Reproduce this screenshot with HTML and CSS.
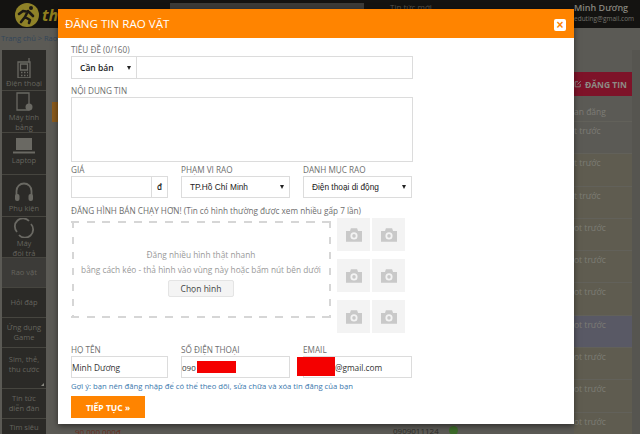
FILE: index.html
```html
<!DOCTYPE html>
<html lang="vi">
<head>
<meta charset="utf-8">
<title>Đăng tin rao vặt</title>
<link rel="stylesheet" href="styles.css">
</head>
<body>
<div class="page">
  <header class="topbar">
    <div class="logo"><svg width="26" height="26" viewBox="0 0 26 26"><circle cx="13" cy="13" r="12" fill="#8f8228"/><path d="M7 20l4-5 5 3-1 3M9 9l6 1 4 4M11 15l3-6M5 12l4-3" fill="none" stroke="#1d1a14" stroke-width="2.600" stroke-linecap="round" stroke-linejoin="round"/><circle cx="17" cy="6" r="2" fill="#1d1a14"/></svg><span class="logo-text">thegioididong</span></div>
    <div class="searchbox"></div>
    <div class="top-note">Tin tức mới</div>
    <div class="user"><b>Minh Dương</b><small>eduting@gmail.com</small></div>
  </header>
  <div class="crumbs">Trang chủ &gt; Rao vặt</div>
  <div class="main">
    <nav class="side">
      <div class="item h41"><svg width="20" height="24" viewBox="0 0 20 24"><path d="M4 8h12v16H4zM6.500 10h7v6h-7zM7 18.500h1.500M10 18.500h1.500M13 18.500h1M7 21.500h1.500M10 21.500h1.500M13 21.500h1M15 8V4" fill="none" stroke="#6a6963" stroke-width="1.300"/></svg>Điện thoại</div>
      <div class="item h42 snug"><svg width="22" height="20" viewBox="0 0 22 20"><path d="M4 1h12v17H4z" fill="none" stroke="#6a6963" stroke-width="1.300"/><circle cx="16" cy="15" r="3.500" fill="#6a6963"/></svg>Máy tính<br>bảng</div>
      <div class="item h42 lift"><svg width="26" height="20" viewBox="0 0 26 20"><path d="M5 3h16v12H5z" fill="#6a6963"/><path d="M2 17.500h22" stroke="#6a6963" stroke-width="2"/></svg>Laptop</div>
      <div class="item h42"><svg width="24" height="24" viewBox="0 0 24 24"><path d="M4.500 17V12a7.500 7.500 0 0 1 15 0v5" fill="none" stroke="#6a6963" stroke-width="1.800"/><rect x="3" y="15" width="4.500" height="7" rx="2" fill="#6a6963"/><rect x="16.500" y="15" width="4.500" height="7" rx="2" fill="#6a6963"/></svg>Phụ kiện</div>
      <div class="item h41 snug"><svg width="22" height="20" viewBox="0 0 22 20"><path d="M4 14A8 8 0 0 1 16 3M18 6A8 8 0 0 1 6 17" fill="none" stroke="#6a6963" stroke-width="1.800"/></svg>Máy<br>đổi trả</div>
      <div class="item h30 on">Rao vặt</div>
      <div class="item h30">Hỏi đáp</div>
      <div class="item h30">Ứng dụng<br>Game</div>
      <div class="item h41 lift2">Sim, thẻ,<br>thu cước<i class="corner"></i></div>
      <div class="item h30">Tin tức<br>diễn đàn</div>
      <div class="item last">Tìm siêu</div>
    </nav>
    <div class="content">
      <div class="post-btn"><svg width="14" height="14" viewBox="0 0 14 14"><path d="M11 7v5H2V3h5M6 8l6-6" fill="none" stroke="#8d8b85" stroke-width="1.600"/></svg>ĐĂNG TIN</div>
      <div class="ago head">an đăng</div>
      <div class="ago">t trước</div>
      <div class="ago tint">t trước</div>
      <div class="ago tint">t trước</div>
      <div class="ago tint">ot trước</div>
      <div class="ago tint">ot trước</div>
      <div class="ago tint">ot trước</div>
      <div class="ago blue">ot trước</div>
      <div class="ago tint">ot trước</div>
      <div class="ago tint">ot trước</div>
      <div class="ago tint">ot trước</div>
    </div>
    <div class="scroll"></div>
  </div>
  <i class="peek-tab"></i>
  <span class="peek-price">90.000.000đ</span>
  <span class="peek-phone">0909011124</span>
  <i class="peek-check"></i>
</div>

<section class="modal">
  <h1 class="modal-head">ĐĂNG TIN RAO VẶT<span class="close">×</span></h1>
  <form class="modal-body">
    <label class="lbl">TIÊU ĐỀ (0/160)</label>
    <div class="title-row">
      <div class="box sel type">Cần bán<i class="caret"></i></div>
      <div class="box grow"></div>
    </div>
    <label class="lbl gap1">NỘI DUNG TIN</label>
    <div class="box area"></div>
    <div class="cols">
      <div class="col c1"><label class="lbl">GIÁ</label><div class="box price"><span class="dong">đ</span></div></div>
      <div class="col c2"><label class="lbl">PHẠM VI RAO</label><div class="box sel arial">TP.Hồ Chí Minh<i class="caret"></i></div></div>
      <div class="col c3"><label class="lbl">DANH MỤC RAO</label><div class="box sel arial">Điện thoại di động<i class="caret"></i></div></div>
    </div>
    <p class="lbl photos-lbl">ĐĂNG HÌNH BÁN CHẠY HƠN! (Tin có hình thường được xem nhiều gấp 7 lần)</p>
    <div class="photos">
      <div class="drop">
        <p>Đăng nhiều hình thật nhanh</p>
        <p>bằng cách kéo - thả hình vào vùng này hoặc bấm nút bên dưới</p>
        <span class="pick">Chọn hình</span>
      </div>
      <div class="thumbs">
        <div class="thumb"><svg class="cam" viewBox="0 0 18 15"><path d="M0 3h4.500l1-3h7l1 3H18v12H0z" fill="#c9c9c9"/><circle cx="9" cy="8.500" r="4" fill="#f3f3f3"/><circle cx="9" cy="8.500" r="2" fill="#c9c9c9"/></svg></div>
        <div class="thumb"><svg class="cam" viewBox="0 0 18 15"><path d="M0 3h4.500l1-3h7l1 3H18v12H0z" fill="#c9c9c9"/><circle cx="9" cy="8.500" r="4" fill="#f3f3f3"/><circle cx="9" cy="8.500" r="2" fill="#c9c9c9"/></svg></div>
        <div class="thumb"><svg class="cam" viewBox="0 0 18 15"><path d="M0 3h4.500l1-3h7l1 3H18v12H0z" fill="#c9c9c9"/><circle cx="9" cy="8.500" r="4" fill="#f3f3f3"/><circle cx="9" cy="8.500" r="2" fill="#c9c9c9"/></svg></div>
        <div class="thumb"><svg class="cam" viewBox="0 0 18 15"><path d="M0 3h4.500l1-3h7l1 3H18v12H0z" fill="#c9c9c9"/><circle cx="9" cy="8.500" r="4" fill="#f3f3f3"/><circle cx="9" cy="8.500" r="2" fill="#c9c9c9"/></svg></div>
        <div class="thumb"><svg class="cam" viewBox="0 0 18 15"><path d="M0 3h4.500l1-3h7l1 3H18v12H0z" fill="#c9c9c9"/><circle cx="9" cy="8.500" r="4" fill="#f3f3f3"/><circle cx="9" cy="8.500" r="2" fill="#c9c9c9"/></svg></div>
        <div class="thumb"><svg class="cam" viewBox="0 0 18 15"><path d="M0 3h4.500l1-3h7l1 3H18v12H0z" fill="#c9c9c9"/><circle cx="9" cy="8.500" r="4" fill="#f3f3f3"/><circle cx="9" cy="8.500" r="2" fill="#c9c9c9"/></svg></div>
      </div>
    </div>
    <div class="cols contact">
      <div class="col c1"><label class="lbl">HỌ TÊN</label><div class="box val">Minh Dương</div></div>
      <div class="col c2"><label class="lbl">SỐ ĐIỆN THOẠI</label><div class="box val small">090<span class="red r1"></span></div></div>
      <div class="col c3"><label class="lbl">EMAIL</label><div class="box val mail"><span class="red r2"></span>@gmail.com</div></div>
    </div>
    <p class="hint">Gợi ý: bạn nên đăng nhập để có thể theo dõi, sửa chữa và xóa tin đăng của bạn</p>
    <button class="next" type="button">TIẾP TỤC »</button>
  </form>
</section>
</body>
</html>
```
FILE: styles.css
```css
* { box-sizing: border-box; }
html, body { margin: 0; height: 100%; overflow: hidden; }
body { width: 640px; height: 434px; background: #5b5a55; font-family: "Open Sans", sans-serif; position: relative; }
.page { width: 640px; height: 434px; overflow: hidden; position: relative; }

.topbar { height: 28px; background: #141311; display: flex; align-items: flex-start; }
.logo { display: flex; align-items: center; gap: 2px; padding: 2px 0 0 14px; width: 170px; height: 28px; flex: none; }
.logo-text { color: #8f7f1e; font: italic bold 16px "Open Sans", sans-serif; }
.searchbox { width: 194px; height: 25px; margin-top: 3px; background: #3c3b38; flex: none; }
.top-note { margin: 2px 0 0 26px; font-size: 8px; line-height: 10px; color: #55544f; white-space: nowrap; }
.user { margin-left: auto; width: 66px; padding: 3px 0 0 0; color: #77766f; display: flex; flex-direction: column; white-space: nowrap; overflow: hidden; }
.user b { font-size: 9px; font-weight: 600; line-height: 10px; color: #85847d; }
.user small { font-size: 6.500px; line-height: 8px; margin-top: 2px; }

.crumbs { height: 22px; padding: 5px 0 0 1px; font-size: 7.500px; color: #33465a; line-height: 10px; white-space: nowrap; }
.main { display: flex; height: 384px; }
.side { width: 44px; margin-left: 2px; background: #2b2a27; color: #65645e; font-size: 7.500px; line-height: 10px; text-align: center; flex: none; }
.item { border-bottom: 1px solid #46453f; position: relative; display: block; padding-top: 4px; white-space: nowrap; }
.item svg { display: block; margin: 0 auto; }
.h41 { height: 41px; }
.h42 { height: 42px; }
.h30 { height: 30px; padding-top: 9px; }
.h30:nth-child(8), .h30:nth-child(10) { padding-top: 4px; }
.snug { padding-top: 1px; }
.lift { padding-top: 2px; }
.lift2 { padding-top: 6px; }
.last { height: 14px; border: 0; padding-top: 3px; }
.on { background: #3c3b38; }
.corner { position: absolute; right: 2px; bottom: 2px; border-left: 3px solid transparent; border-bottom: 3px solid #8a8982; }
.content { flex: 1; padding: 22px 0 0 528px; font-size: 8.500px; color: #7d7c75; }
.scroll { width: 8px; background: #565550; flex: none; }
.post-btn { height: 24px; width: 58px; background: #7e1329; display: flex; align-items: center; gap: 3px; justify-content: flex-end; padding-right: 5px; color: #8d8b85; font-size: 8.500px; font-weight: 700; white-space: nowrap; }
.ago { height: 32.300px; padding: 3px 0 0 0; border-bottom: 1px solid #62615a; white-space: nowrap; }
.head { height: 16px; margin-top: 10px; padding: 0; line-height: 12px; }
.tint { background: #5f5c50; }
.blue { background: #595965; }
.peek-tab { position: absolute; left: 52px; top: 102px; width: 6px; height: 20px; background: #8a5a1c; }
.peek-price { position: absolute; left: 75px; top: 427px; font-size: 8px; line-height: 10px; color: #6a2f20; white-space: nowrap; }
.peek-phone { position: absolute; left: 393px; top: 426px; font-size: 8px; line-height: 10px; color: #2f2e2a; white-space: nowrap; }
.peek-check { position: absolute; left: 449px; top: 426px; width: 9px; height: 9px; border-radius: 50%; background: #3d6a2a; }

.modal { position: absolute; left: 58px; top: 9px; width: 516px; height: 415px; background: #fff; box-shadow: 0 2px 6px rgba(0,0,0,.5); }
.modal-head { margin: 0; height: 29px; background: #ff8400; color: #fff; font-size: 11.600px; font-weight: 400; line-height: 29px; padding-left: 7px; position: relative; }
.close { position: absolute; right: 8px; top: 10px; width: 12px; height: 12px; background: #fff; border-radius: 2px; color: #ff8400; font: bold 12px/12px "Liberation Sans", sans-serif; text-align: center; }
.modal-body { display: block; padding: 5px 0 0 13px; width: 355px; }
.lbl { display: block; margin: 0; color: #6e6e6e; font-size: 8.200px; line-height: 14px; height: 13px; white-space: nowrap; }
.box { border: 1px solid #dcdcdc; height: 22px; font-size: 8.500px; color: #222; background: #fff; display: flex; align-items: center; position: relative; white-space: nowrap; }
.title-row { display: flex; height: 23px; border: 1px solid #dcdcdc; }
.title-row .box { border: 0; height: 21px; }
.type { width: 65px; border-right: 1px solid #dcdcdc !important; padding-left: 8px; font-weight: 600; }
.grow { flex: 1; }
.gap1 { margin-top: 5px; }
.area { height: 65px; display: block; }
.cols { display: flex; margin-top: 1px; }
.col { flex: none; }
.c1 { width: 110px; }
.c2 { width: 122px; }
.c3 { width: 110px; }
.c1 .box { width: 97px; }
.c2 .box { width: 109px; }
.c3 .box { width: 109px; }
.price { justify-content: flex-end; }
.dong { width: 16px; height: 100%; border-left: 1px solid #dcdcdc; text-align: center; line-height: 20px; font-weight: 600; font-size: 8px; }
.sel { padding-left: 8px; }
.arial { font-family: "Liberation Sans", sans-serif; font-size: 8.300px; }
.caret { position: absolute; right: 5px; top: 50%; margin-top: -2px; border-left: 2.500px solid transparent; border-right: 2.500px solid transparent; border-top: 4px solid #222; }
.photos-lbl { margin-top: 6px; height: 13px; }
.photos { display: flex; gap: 6px; height: 115px; margin-top: 1px; width: 355px; }
.drop {
  width: 260px; height: 97px; margin-top: 3px; text-align: center; color: #999; font-size: 8.300px; padding-top: 27px;
  background:
    repeating-linear-gradient(90deg, #d6d6d6 0 8px, transparent 8px 15.700px) 0 0 / 100% 2px no-repeat,
    repeating-linear-gradient(90deg, #d6d6d6 0 8px, transparent 8px 15.700px) 0 100% / 100% 2px no-repeat,
    repeating-linear-gradient(180deg, #d6d6d6 0 7px, transparent 7px 15.700px) 1px 0 / 2px 100% no-repeat,
    repeating-linear-gradient(180deg, #d6d6d6 0 7px, transparent 7px 15.700px) 100% 0 / 2px 100% no-repeat;
}
.drop p { margin: 0; line-height: 14.500px; white-space: nowrap; }
.pick { display: inline-block; margin-top: 3px; width: 66px; height: 17px; line-height: 15px; color: #444; background: #f4f4f4; border: 1px solid #e4e4e4; border-radius: 2px; font-size: 8.500px; }
.thumbs { display: grid; grid-template-columns: 33px 33px; column-gap: 2px; row-gap: 8px; align-content: start; }
.thumb { height: 33px; background: #f3f3f3; display: flex; align-items: center; justify-content: center; }
.cam { width: 16px; height: 14px; }
.contact { margin-top: 10px; }
.val { font-size: 8.300px; color: #333; padding-left: 0; }
.small { font-size: 8px; }
.red { display: block; background: #f40000; }
.r1 { width: 39px; height: 12px; margin: 0 0 0 1px; }
.r2 { position: absolute; left: -7px; top: 0; width: 38px; height: 19px; }
.mail { padding-left: 31px; }
.hint { margin: 3px 0 0; font-size: 7.700px; line-height: 11px; color: #3a78ad; white-space: nowrap; }
.next { display: block; margin-top: 4px; width: 74px; height: 22px; border: 0; padding: 0; background: #ff8400; color: #fff; font: 700 8.500px "Open Sans", sans-serif; }
```
